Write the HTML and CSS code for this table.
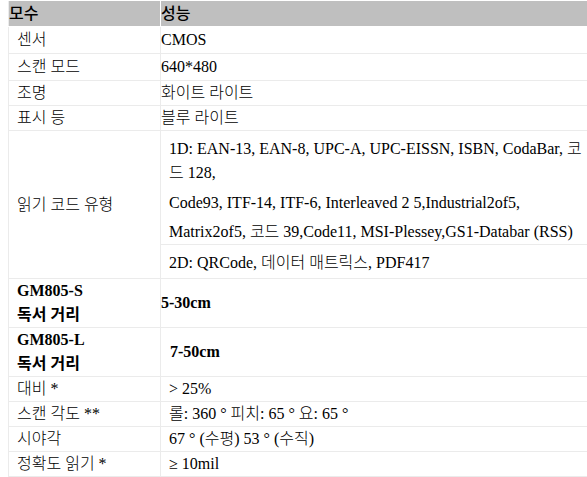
FILE: index.html
```html
<!DOCTYPE html>
<html lang="ko">
<head>
<meta charset="utf-8">
<link rel="stylesheet" href="styles.css">
</head>
<body>
<table class="spec">
  <colgroup><col class="c1"><col class="c2"></colgroup>
  <thead>
    <tr class="head"><th>모수</th><th>성능</th></tr>
  </thead>
  <tbody>
    <tr class="tall"><td class="k">센서</td><td>CMOS</td></tr>
    <tr class="tall"><td class="k">스캔 모드</td><td>640*480</td></tr>
    <tr><td class="k">조명</td><td>화이트 라이트</td></tr>
    <tr><td class="k">표시 등</td><td>블루 라이트</td></tr>
    <tr>
      <td class="k" rowspan="2">읽기 코드 유형</td>
      <td class="codes">
        <div class="p1">1D: EAN-13, EAN-8, UPC-A, UPC-EISSN, ISBN, CodaBar, 코<br>드 128,</div>
        <div class="p2">Code93, ITF-14, ITF-6, Interleaved 2 5,Industrial2of5,</div>
        <div class="p3">Matrix2of5, 코드 39,Code11, MSI-Plessey,GS1-Databar (RSS)</div>
      </td>
    </tr>
    <tr><td class="codes2">2D: QRCode, 데이터 매트릭스, PDF417</td></tr>
    <tr class="dist"><td class="k"><b>GM805-S<br>독서 거리</b></td><td class="v0"><b>5-30cm</b></td></tr>
    <tr class="dist"><td class="k"><b>GM805-L<br>독서 거리</b></td><td class="v"><b>7-50cm</b></td></tr>
    <tr><td class="k">대비 *</td><td class="v">&gt; 25%</td></tr>
    <tr><td class="k">스캔 각도 **</td><td class="v">롤: 360 ° 피치: 65 ° 요: 65 °</td></tr>
    <tr><td class="k">시야각</td><td class="v">67 ° (수평) 53 ° (수직)</td></tr>
    <tr><td class="k">정확도 읽기 *</td><td class="v">≥ 10mil</td></tr>
  </tbody>
</table>
</body>
</html>
```
FILE: styles.css
```css
html, body {
  margin: 0;
  padding: 0;
  background: #ffffff;
  overflow: hidden;
}
body {
  padding-left: 8px;
  font-family: "Liberation Serif", "Noto Sans CJK KR", serif;
  font-size: 16px;
  font-weight: 300;
  color: #000000;
}
.spec {
  border-collapse: collapse;
  width: 580px;
  table-layout: fixed;
}
.c1 { width: 152px; }
.spec th,
.spec td {
  border: 1px solid #ebebeb;
  text-align: left;
  vertical-align: middle;
  padding: 2px 0;
  line-height: 20px;
  white-space: nowrap;
}
.spec tr > :last-child { border-right: none; }
.head th {
  background: #bfbfbf;
  font-weight: 500;
  line-height: 21px;
  border-color: #ffffff;
  border-top: 1px solid #ffffff;
}
.head th:first-child { border-left: 1px solid #ebebeb; }
.spec b { font-weight: bold; }
.tall td { line-height: 22px; }
.spec td.k { padding-left: 8px; }
.spec td.v { padding-left: 8px; }
.spec td.v0 { padding-left: 0; }
.spec td.codes {
  padding: 6px 0 0 8px;
  line-height: 24px;
}
.codes .p2 { margin-top: 6px; }
.codes .p3 { margin-top: 5px; }
.spec td.codes2 {
  padding: 6px 0 3px 8px;
  line-height: 24px;
}
.dist td { line-height: 24px; padding: 0; }
.dist td.k { padding-left: 8px; }
.dist td.v { padding-left: 9px; }
```
